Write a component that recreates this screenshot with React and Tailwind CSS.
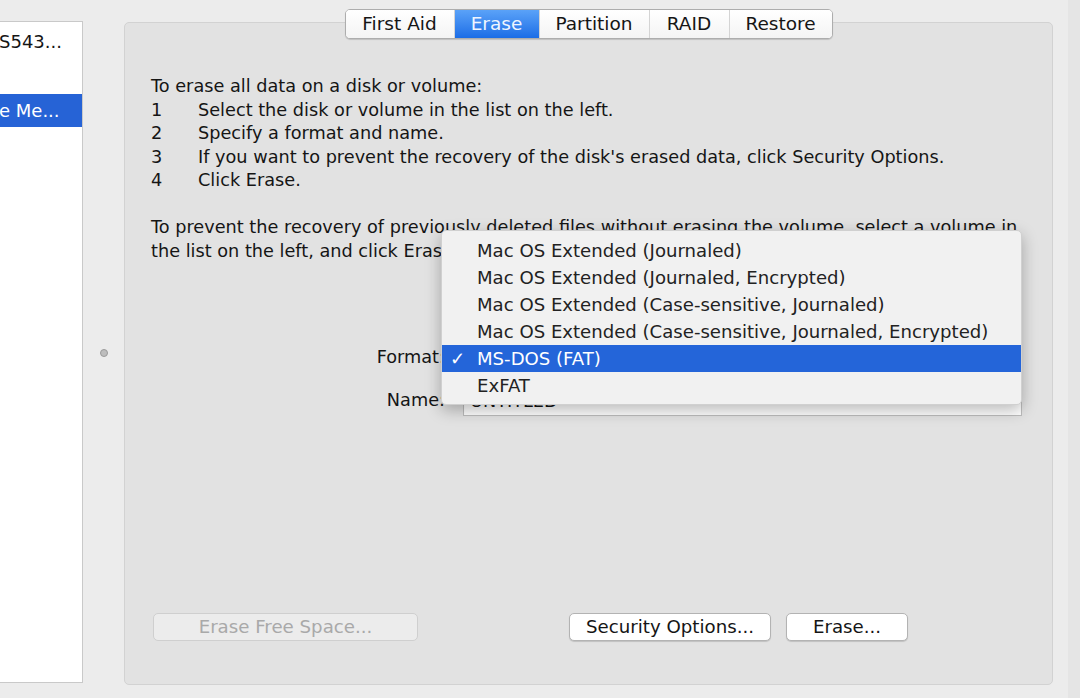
import React from "react";

const tabs = [
  { label: "First Aid", w: "w-[108px]" },
  { label: "Erase", w: "w-[85px]", active: true },
  { label: "Partition", w: "w-[110px]" },
  { label: "RAID", w: "w-[80px]" },
  { label: "Restore", w: "w-[103px]" },
];

const formats = [
  "Mac OS Extended (Journaled)",
  "Mac OS Extended (Journaled, Encrypted)",
  "Mac OS Extended (Case-sensitive, Journaled)",
  "Mac OS Extended (Case-sensitive, Journaled, Encrypted)",
  "MS-DOS (FAT)",
  "ExFAT",
];

const steps = [
  "Select the disk or volume in the list on the left.",
  "Specify a format and name.",
  "If you want to prevent the recovery of the disk's erased data, click Security Options.",
  "Click Erase.",
];

const App = () => {
  return (
    <div className="flex w-[1080px] h-[698px] overflow-hidden bg-[#ececec] text-[#151515] text-[17.7px] font-['DejaVu_Sans',sans-serif]">
      {/* disk list */}
      <div className="mt-[21px] w-[83px] h-[662px] shrink-0 overflow-hidden bg-white border-t border-r border-b border-[#c9c9c9] pt-[2px] text-[18px]">
        <div className="h-[35px] flex items-center whitespace-nowrap -ml-[1px]">S543...</div>
        <div className="h-[35px]"></div>
        <div className="h-[33px] flex items-center whitespace-nowrap bg-[#2663d6] text-white -ml-[1px]">
          e Me...
        </div>
      </div>

      {/* splitter */}
      <div className="w-[41px] shrink-0 flex items-center justify-center pt-[8px]">
        <div className="w-[8px] h-[8px] rounded-full bg-[#bdbdbd] border border-[#9a9a9a]"></div>
      </div>

      {/* main */}
      <div className="w-[929px] shrink-0 pt-[22px]">
        <div className="relative h-[663px] rounded-[5px] bg-[#e2e2e2] border border-[#d2d2d2] flex flex-col pl-[26px] pt-[52px] pb-[43px]">
          {/* tabs */}
          <div className="absolute -top-[14px] left-1/2 -translate-x-1/2 flex h-[30px] rounded-[5px] border border-[#adadad] bg-white shadow-[0_1px_1px_rgba(0,0,0,0.15)] overflow-hidden text-[18.5px]">
            {tabs.map((t, i) => (
              <div
                key={t.label}
                className={
                  "flex items-center justify-center " +
                  t.w +
                  (i > 0 ? " border-l border-[#d4d4d4]" : "") +
                  (t.active
                    ? " bg-gradient-to-b from-[#5aa2f8] to-[#1b6de6] text-[#eef5ff]"
                    : " bg-gradient-to-b from-white to-[#f4f4f4]")
                }
              >
                {t.label}
              </div>
            ))}
          </div>

          {/* instructions */}
          <div className="leading-[23.5px]">
            <div>To erase all data on a disk or volume:</div>
            {steps.map((s, i) => (
              <div key={i} className="flex">
                <span className="w-[47px] shrink-0">{i + 1}</span>
                <span className="whitespace-nowrap">{s}</span>
              </div>
            ))}
            <div className="h-[23.5px]"></div>
            <div className="whitespace-nowrap">
              To prevent the recovery of previously deleted files without erasing the volume, select a volume in
            </div>
            <div>the list on the left, and click Erase Free Space.</div>
          </div>

          {/* format / name */}
          <div className="mt-[79px] flex flex-col gap-[13px]">
            <div className="flex items-center h-[30px]">
              <div className="w-[294px] text-right">Format:</div>
              <div className="ml-[18px] w-[559px] h-[28px] rounded-[4px] bg-white border border-[#bdbdbd]"></div>
            </div>
            <div className="flex items-center h-[30px]">
              <div className="w-[294px] text-right">Name:</div>
              <div className="ml-[18px] w-[559px] h-[31px] bg-white border border-[#bdbdbd] shadow-[inset_0_1px_1px_rgba(0,0,0,0.1)] flex items-center pl-[6px] pt-[2px]">
                UNTITLED
              </div>
            </div>
          </div>

          {/* buttons */}
          <div className="mt-auto flex items-center text-[18.2px]">
            <div className="ml-[2px] w-[265px] h-[28px] rounded-[5px] border border-[#cfcfcf] bg-[#ececec] text-[#a9a9a9] flex items-center justify-center">
              Erase Free Space...
            </div>
            <div className="ml-[151px] w-[202px] h-[28px] rounded-[5px] border border-[#b3b3b3] bg-white shadow-[0_1px_1px_rgba(0,0,0,0.15)] flex items-center justify-center">
              Security Options...
            </div>
            <div className="ml-[15px] w-[122px] h-[28px] rounded-[5px] border border-[#b3b3b3] bg-white shadow-[0_1px_1px_rgba(0,0,0,0.15)] flex items-center justify-center">
              Erase...
            </div>
          </div>

          {/* open format menu */}
          <div className="absolute left-[316px] top-[207px] w-[581px] h-[175px] rounded-[5px] bg-[#f1f1f1] border border-[#d0d0d0] shadow-[0_5px_16px_rgba(0,0,0,0.28)] pt-[6px] text-[#222] text-[18.1px]">
            {formats.map((f) => {
              const sel = f === "MS-DOS (FAT)";
              return (
                <div
                  key={f}
                  className={
                    "relative h-[27px] flex items-center pl-[35px] whitespace-nowrap" +
                    (sel ? " bg-[#2465d9] text-white" : "")
                  }
                >
                  {sel && <span className="absolute left-[8px] font-bold">✓</span>}
                  {f}
                </div>
              );
            })}
          </div>
        </div>
      </div>

      <div className="w-[15px] shrink-0"></div>
      <div className="w-[12px] shrink-0 bg-[#e5e5e5]"></div>
    </div>
  );
};

export default App;
